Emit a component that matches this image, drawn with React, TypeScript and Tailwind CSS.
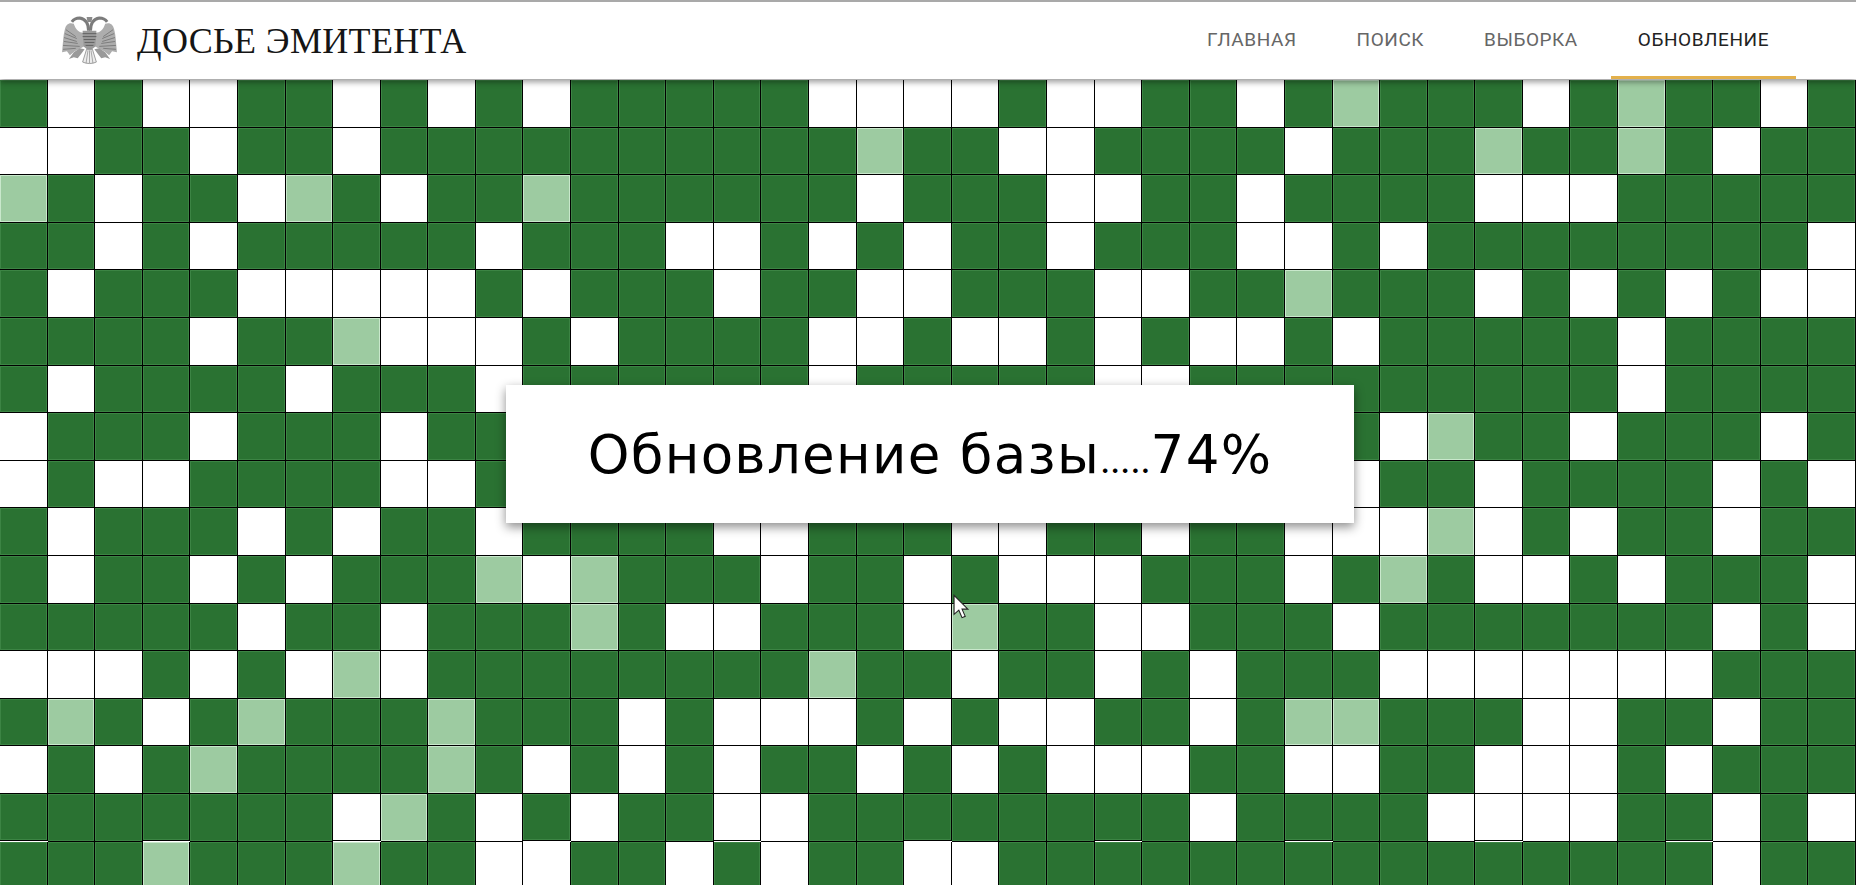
import React from "react";

// G - зеленая ячейка, W - белая, L - светлая
const rows = [
  "GWGWW GGWGW GWGGG GGWWW WGWWG GWGLG GGWGL GGWG",
  "WWGGW GGWGG GGGGG GGGLG GWWGG GGWGG GLGGL GWGG",
  "LGWGG WLGWG GLGGG GGGWG GGWWG GWGGG GWWWG GGGG",
  "GGWGW GGGGG WGGGW WGWGW GGWGG GWWGW GGGGG GGGW",
  "GWGGG WWWWW GWGGG WGGWW GGGWW GGLGG GWGWG WGWW",
  "GGGGW GGLWW WGWGG GGWWG WWGWG WWGWG GGGGW GGGG",
  "GWGGG GWGGG WGGGG GGWGG GGGWW GGGGG GGGGW GGGG",
  "WGGGW GGGWG GGGGG GGGGG GGGGG GGGGW LGGWG GGWG",
  "WGWWG GGGWW GGGGG GGGGG GGGGG GGGWG GWGGG GWGW",
  "GWGGG WGWGG WGGGG WWGGG WWGGW GGWWW LWGWG GWGG",
  "GWGGW GWGGG LWLGG GWGGW GWWWG GGWGL GWWGW GGGW",
  "GGGGG WGGWG GGLGW WGGGW LGGWW GGGWG GGGGG GWGW",
  "WWWGW GWLWG GGGGG GGLGG WGGWG WGGGW WWWWW WGGG",
  "GLGWG LGGGL GGGWG WWWGW GWWGG WGLLG GGWWG GWGG",
  "WGWGL GGGGL GWGWG WGGWG WGWWW GGWWG GWWWG WGGG",
  "GGGGG GGWLG WGWGG WWGGG GGGGG WGGGG WWWWG GWGW",
  "GGGLG GGLGG WWGGW GWGGW WGGGG GGGGG GGGGG GWGG",
];

const navItems = ["ГЛАВНАЯ", "ПОИСК", "ВЫБОРКА", "ОБНОВЛЕНИЕ"];

function Cell({ kind }: { kind: string }) {
  return (
    <div className="aspect-square border-r border-b border-black">
      {kind === "G" && <div className="h-full w-full border border-[#3c8444] bg-[#2a7232]" />}
      {kind === "W" && <div className="h-full w-full bg-white" />}
      {kind === "L" && <div className="h-full w-full border border-[#c9e8cc] bg-[#9dcba1]" />}
    </div>
  );
}

function Emblem() {
  return (
    <svg viewBox="0 0 56 50" className="h-[49px] w-[55px]">
      {/* крылья */}
      <path
        d="M26 18L12 8C7 6 4 9 3 13C1 20 1 28 0 37L5 36L8 40L13 36L19 33L24 30Z"
        fill="#adadad"
      />
      <path
        d="M30 18L44 8C49 6 52 9 53 13C55 20 55 28 56 37L51 36L48 40L43 36L37 33L32 30Z"
        fill="#adadad"
      />
      <path d="M12 8C16 5 20 7 24 10L23 17C19 18 14 15 12 8Z" fill="#fff" />
      <path d="M44 8C40 5 36 7 32 10L33 17C37 18 42 15 44 8Z" fill="#fff" />
      <g stroke="#666" strokeWidth="0.7" fill="none">
        <path d="M4 14L14 21M3 18L15 23M2 22L15 26M2 26L16 28M1 30L18 31M1 34L14 33" />
        <path d="M52 14L42 21M53 18L41 23M54 22L41 26M54 26L40 28M55 30L38 31M55 34L42 33" />
      </g>
      {/* головы */}
      <path d="M27 15C27 8 24 3 18 2C15 2 12 3 10 6" stroke="#7c7c7c" strokeWidth="3" fill="none" />
      <path d="M29 15C29 8 32 3 38 2C41 2 44 3 46 6" stroke="#7c7c7c" strokeWidth="3" fill="none" />
      <path d="M25 1H31L30 6H26Z" fill="#8a8a8a" />
      {/* тело */}
      <path d="M21 15H35L34 31L28 36L22 31Z" fill="#9a9a9a" />
      <path d="M21 18H35M21 21H35M22 24H34M23 27H33M24 30H32" stroke="#555" strokeWidth="0.8" />
      {/* лапы */}
      <path d="M18 33L12 37L7 44L12 42L16 43L20 38L23 34Z" fill="#999" />
      <path d="M38 33L44 37L49 44L44 42L40 43L36 38L33 34Z" fill="#999" />
      {/* хвост */}
      <path d="M25 34L31 34L35 47C31 49 25 49 21 47Z" fill="#ececec" stroke="#777" strokeWidth="0.7" />
      <path d="M28 35V48M26.5 35L24.5 48M29.5 35L31.5 48" stroke="#777" strokeWidth="0.6" />
    </svg>
  );
}

function Header() {
  return (
    <header className="relative z-10 flex h-[79px] shrink-0 items-center justify-between border-t-2 border-[#a9a9a9] bg-white pr-[60px] pl-[62px] shadow-[0_3px_6px_rgba(0,0,0,0.4)]">
      <div className="flex items-center gap-5">
        <Emblem />
        <span className="font-['Liberation_Serif',serif] text-[36px] leading-none tracking-[0.35px] text-[#151515]">
          ДОСЬЕ ЭМИТЕНТА
        </span>
      </div>
      <nav className="flex h-full gap-[6px] font-['Roboto',sans-serif] text-[19px] tracking-[0.55px]">
        {navItems.map((item, i) => (
          <a
            key={item}
            className={`flex items-center border-b-[3px] px-[27px] pt-[3px] ${
              i === 3 ? "border-[#e3b04b] text-[#222]" : "border-transparent text-[#666]"
            }`}
          >
            {item}
          </a>
        ))}
      </nav>
    </header>
  );
}

export default function App() {
  return (
    <div className="relative flex h-[885px] w-full flex-col overflow-hidden bg-white">
      <Header />
      <main className="mt-px grid grid-cols-[repeat(39,minmax(0,1fr))] content-start">
        {rows.flatMap((row, r) =>
          row
            .replace(/ /g, "")
            .split("")
            .map((kind, c) => <Cell key={`${r}-${c}`} kind={kind} />),
        )}
      </main>

      <div className="absolute top-[385px] left-[506px] z-20 flex h-[138px] w-[848px] items-center justify-center bg-white pt-[2px] font-['DejaVu_Sans',sans-serif] text-[53px] tracking-[1.3px] text-black shadow-[0_4px_10px_rgba(0,0,0,0.45)]">
        <span>
          Обновление базы<span className="font-['Inter',sans-serif] text-[34px] tracking-[0.3px]">.....</span>74%
        </span>
      </div>

      {/* курсор */}
      <svg viewBox="0 0 16 24" className="absolute top-[594px] left-[953px] z-30 h-[26px] w-[17px]">
        <path d="M1 1V19L5.5 15L8.5 22L11.5 20.8L8.5 14H14Z" fill="#fff" stroke="#222" strokeWidth="1" />
      </svg>
    </div>
  );
}
